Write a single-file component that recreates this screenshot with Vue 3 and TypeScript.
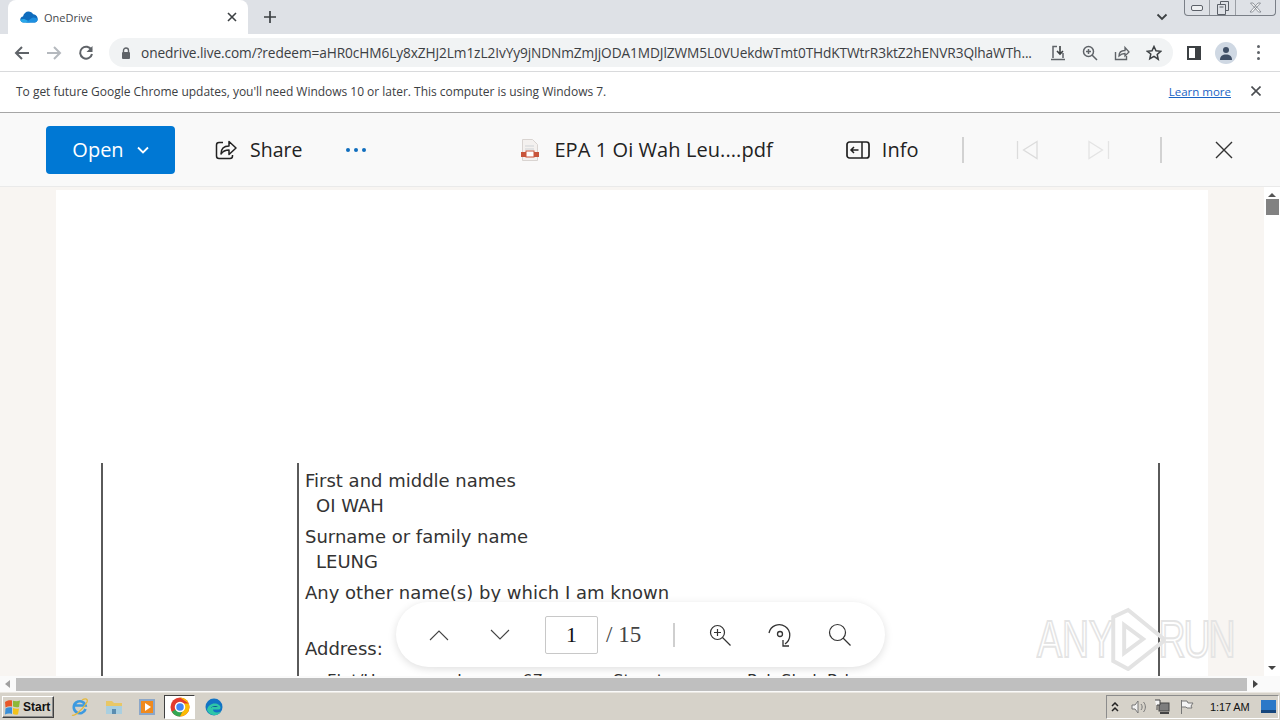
<script setup lang="ts">
const url = 'onedrive.live.com/?redeem=aHR0cHM6Ly8xZHJ2Lm1zL2IvYy9jNDNmZmJjODA1MDJlZWM5L0VUekdwTmt0THdKTWtrR3ktZ2hENVR3QlhaWTh...'
</script>

<template>
  <div class="screen">
    <div class="tabstrip">
      <div class="tab">
        <svg class="cloud" width="18" height="12" viewBox="0 0 18 12">
          <path d="M3.500 11.500C1.500 11.500.3 10 .3 8.500S1.400 5.700 3 5.500C3.500 2.500 6 .5 8.500.5c2 0 3.700 1 4.600 2.800C15.500 3.300 17.700 5.500 17.700 8c0 2-1.500 3.500-3.200 3.500z" fill="#0f6cbd"/>
          <path d="M3.500 11.500C1.500 11.500.3 10 .3 8.500c3-1 5-.5 7.200 1l2.500 2z" fill="#28a8ea"/>
          <path d="M6 11.500l5-4c2-1.500 4.500-1 6.700.5 0 2-1.500 3.500-3.200 3.500z" fill="#1d8fe0"/>
        </svg>
        <span class="tab-title">OneDrive</span>
        <svg class="tab-x" width="10" height="10" viewBox="0 0 10 10"><path d="M1 1l8 8M9 1l-8 8" stroke="#3c4043" stroke-width="1.600"/></svg>
      </div>
      <svg class="new-tab" width="12" height="12" viewBox="0 0 12 12"><path d="M6 0v12M0 6h12" stroke="#3c4043" stroke-width="1.700"/></svg>
      <div class="strip-fill"></div>
      <svg class="tab-search" width="12" height="8" viewBox="0 0 12 8"><path d="M1.500 1.500L6 6l4.500-4.500" fill="none" stroke="#3c4043" stroke-width="1.800"/></svg>
      <div class="winctl">
        <div class="wc wc-min"><span></span></div>
        <div class="wc wc-max">
          <svg width="12" height="14" viewBox="0 0 12 14"><path d="M3.500 3.500V.5h8v9h-3M.5 3.500h8v10h-8zM2.500 6h4" fill="none" stroke="#5b6068"/></svg>
        </div>
        <div class="wc wc-close">
          <svg width="13" height="11" viewBox="0 0 13 11"><path d="M1.500 1h2.500l8 9H9.500zM11.500 1H9l-8 9h2.500z" fill="#fff" stroke="#7a7f87" stroke-width=".8"/></svg>
        </div>
      </div>
    </div>

    <div class="toolbar">
      <svg class="nav first" width="16" height="16" viewBox="0 0 16 16"><path d="M15 8H2M8 2L2 8l6 6" fill="none" stroke="#5f6368" stroke-width="2"/></svg>
      <svg class="nav" width="16" height="16" viewBox="0 0 16 16"><path d="M1 8h13M8 2l6 6-6 6" fill="none" stroke="#b5b9be" stroke-width="2"/></svg>
      <svg class="nav" width="16" height="16" viewBox="0 0 16 16"><path d="M13.500 5A6 6 0 1 0 14 9" fill="none" stroke="#5f6368" stroke-width="2"/><path d="M14.500 1v6h-6z" fill="#5f6368"/></svg>
      <div class="omnibox">
        <svg class="lock" width="10" height="12" viewBox="0 0 10 12"><path d="M2.500 5V3.500a2.500 2.500 0 0 1 5 0V5" fill="none" stroke="#5f6368" stroke-width="1.400"/><rect x="1" y="5" width="8" height="7" rx="1" fill="#5f6368"/></svg>
        <span class="url">{{ url }}</span>
        <svg class="omni-i" width="16" height="16" viewBox="0 0 16 16"><path d="M3 13V1.500h4M13 8v5M1 14.500h14" fill="none" stroke="#5f6368" stroke-width="1.500"/><path d="M10 1v7M7 6l3 3 3-3" fill="none" stroke="#3c4043" stroke-width="1.600"/></svg>
        <svg class="omni-i" width="16" height="16" viewBox="0 0 16 16"><circle cx="6.500" cy="6.500" r="5" fill="none" stroke="#5f6368" stroke-width="1.500"/><path d="M10 10l5 5M4 6.500h5M6.500 4v5" stroke="#5f6368" stroke-width="1.500"/></svg>
        <svg class="omni-i" width="16" height="16" viewBox="0 0 16 16"><path d="M1.500 7v7.500h11V11" fill="none" stroke="#5f6368" stroke-width="1.400"/><path d="M5 11c0-4 3-5.500 6-5.500V2.500l4 4.500-4 4V8.500c-3 0-4.500 1-6 2.500z" fill="none" stroke="#5f6368" stroke-width="1.300"/></svg>
        <svg class="omni-i" width="16" height="16" viewBox="0 0 16 16"><path d="M8 1.500l2 4.300 4.700.5-3.500 3.200 1 4.700L8 11.300l-4.200 2.400 1-4.700L1.300 6.300 6 5.800z" fill="none" stroke="#3c4043" stroke-width="1.500"/></svg>
      </div>
      <svg class="side-i" width="14" height="14" viewBox="0 0 14 14"><rect x="1" y="1" width="12" height="12" fill="none" stroke="#3c4043" stroke-width="2"/><rect x="8" y="1" width="5" height="12" fill="#3c4043"/></svg>
      <div class="avatar">
        <svg width="14" height="14" viewBox="0 0 14 14"><circle cx="7" cy="4" r="3" fill="#3f4f66"/><path d="M1 14c0-4 2.500-5.500 6-5.500s6 1.500 6 5.500z" fill="#3f4f66"/></svg>
      </div>
      <div class="kebab"><i></i><i></i><i></i></div>
    </div>

    <div class="infobar">
      <span class="info-text">To get future Google Chrome updates, you'll need Windows 10 or later. This computer is using Windows 7.</span>
      <a class="learn">Learn more</a>
      <svg class="info-x" width="10" height="10" viewBox="0 0 10 10"><path d="M.5.500l9 9M9.500.500l-9 9" stroke="#4a4d51" stroke-width="1.600"/></svg>
    </div>

    <div class="viewerbar">
      <div class="open-btn">
        <span>Open</span>
        <svg width="12" height="8" viewBox="0 0 12 8"><path d="M1 1.500l5 5 5-5" fill="none" stroke="#fff" stroke-width="1.800"/></svg>
      </div>
      <div class="vb-item share">
        <svg width="22" height="22" viewBox="0 0 22 22"><path d="M8 3.500H4a2.500 2.500 0 0 0-2.500 2.500v11A2.500 2.500 0 0 0 4 19.500h11a2.500 2.500 0 0 0 2.500-2.500v-1" fill="none" stroke="#222" stroke-width="1.500"/><path d="M6 15c0-5 3-8 8-8V2.500L21 9l-7 6.500V11c-3 0-6 1-8 4z" fill="none" stroke="#222" stroke-width="1.500" stroke-linejoin="round"/></svg>
        <span>Share</span>
      </div>
      <div class="dots"><i></i><i></i><i></i></div>
      <div class="vb-file">
        <svg width="18" height="22" viewBox="0 0 18 22"><path d="M1.500.500h10l5 5v16h-15z" fill="#f4f1ef" stroke="#d9d4d1"/><path d="M4 7h9M4 10h9" stroke="#cfd3d6"/><rect x="0" y="13" width="18" height="5" fill="#c8543a"/><rect x="5" y="12" width="8" height="6" fill="#fff" stroke="#c8543a"/></svg>
        <span>EPA 1 Oi Wah Leu....pdf</span>
      </div>
      <div class="vb-item info">
        <svg width="24" height="20" viewBox="0 0 24 20"><rect x="1" y="2" width="22" height="16" rx="2.500" fill="none" stroke="#222" stroke-width="1.700"/><path d="M16 2v16M12.500 10H5M8 7l-3 3 3 3" fill="none" stroke="#222" stroke-width="1.500"/></svg>
        <span>Info</span>
      </div>
      <div class="vsep"></div>
      <svg class="pg first-pg" width="22" height="20" viewBox="0 0 22 20"><path d="M1.500 1v18M21 1.500L7.500 10 21 18.500z" fill="none" stroke="#dcdcdc" stroke-width="1.300"/></svg>
      <svg class="pg last-pg" width="22" height="20" viewBox="0 0 22 20"><path d="M20.500 1v18M1 1.500L14.500 10 1 18.500z" fill="none" stroke="#e4e4e4" stroke-width="1.300"/></svg>
      <div class="vsep sep2"></div>
      <svg class="close-x" width="18" height="18" viewBox="0 0 18 18"><path d="M1 1l16 16M17 1L1 17" stroke="#333" stroke-width="1.400"/></svg>
    </div>

    <div class="content">
      <div class="viewport">
        <div class="page">
          <div class="scan">
            <div class="scan-left"></div>
            <div class="scan-main">
              <div class="lab">First and middle names</div>
              <div class="val">OI WAH</div>
              <div class="lab">Surname or family name</div>
              <div class="val">LEUNG</div>
              <div class="lab">Any other name(s) by which I am known</div>
              <div class="val">&nbsp;</div>
              <div class="lab">Address:</div>
              <div class="addr"><span>Flat/House number</span><span>67</span><span>Street</span><span>Pak Shek Rd</span></div>
            </div>
          </div>
        </div>
        <div class="vscroll">
          <span class="up"></span>
          <span class="thumb"></span>
          <span class="down"></span>
        </div>
        <div class="pager">
          <svg class="chev" width="20" height="12" viewBox="0 0 20 12"><path d="M1 11l9-9 9 9" fill="none" stroke="#444" stroke-width="1.100"/></svg>
          <svg class="chev chev2" width="20" height="12" viewBox="0 0 20 12"><path d="M1 1l9 9 9-9" fill="none" stroke="#444" stroke-width="1.100"/></svg>
          <div class="pageno">1</div>
          <span class="pagecount">/ 15</span>
          <div class="psep"></div>
          <svg class="p-i zoom-in" width="24" height="24" viewBox="0 0 24 24"><circle cx="9.500" cy="9.500" r="7" fill="none" stroke="#333" stroke-width="1.200"/><path d="M14.500 14.500l8 8M9.500 6v7M6 9.500h7" stroke="#333" stroke-width="1.200"/></svg>
          <svg class="p-i rotate" width="26" height="26" viewBox="0 0 26 26"><path d="M2 11A10.500 10.500 0 1 1 18 22" fill="none" stroke="#333" stroke-width="1.300"/><circle cx="13" cy="12" r="2.500" fill="none" stroke="#333" stroke-width="1.300"/><path d="M16 18v6h6" fill="none" stroke="#333" stroke-width="1.300"/></svg>
          <svg class="p-i zoom" width="24" height="24" viewBox="0 0 24 24"><circle cx="9.500" cy="9.500" r="8" fill="none" stroke="#333" stroke-width="1.200"/><path d="M15 15l7.500 7.500" stroke="#333" stroke-width="1.200"/></svg>
        </div>
        <div class="watermark">
          <span>ANY</span>
          <svg class="wm-tri" width="80" height="64" viewBox="0 0 58 64" preserveAspectRatio="none"><path d="M5 10L5 54 20 62 57 33 20 3zM16 18v28l19-14z" fill="none" stroke="#e3e3e3" stroke-width="4"/></svg>
          <span class="wm-run">RUN</span>
        </div>
      </div>
      <div class="hscroll">
        <span class="left"></span>
        <span class="hthumb"></span>
        <span class="right"></span>
      </div>
    </div>

    <div class="taskbar">
      <div class="start">
        <svg width="17" height="16" viewBox="0 0 17 16"><path d="M1 3c2-1.500 4.500-2 7-1.500v6C5.500 7 3.500 7.500 1.500 8.500z" fill="#e8582a"/><path d="M9 1.700c2 .6 4.500.8 7-.2l-1 6.500c-2 .5-4 .3-6-.5z" fill="#8db83a"/><path d="M1.500 9.500c2-1 4-1.500 6.500-1V15c-2.500-.7-5-.5-7 .5z" fill="#3a8fd8"/><path d="M9 9c2 .8 4 1 6 .5l-1 6c-2 .4-3.500 0-5-.5z" fill="#f2c21b"/></svg>
        <span>Start</span>
      </div>
      <svg class="tb-i ie" width="20" height="20" viewBox="0 0 20 20"><path d="M15.500 12A6 6 0 1 1 15.500 8.500H5" fill="none" stroke="#3d9ae0" stroke-width="2.600"/><path d="M2 18c2 1.500 10-4 15-13 1-3-1-4-5-2" fill="none" stroke="#e6b93a" stroke-width="1.300"/></svg>
      <svg class="tb-i folder" width="18" height="18" viewBox="0 0 18 18"><path d="M1 3h6l2 2h8v11H1z" fill="#e8c766"/><path d="M1 8h16v8H1z" fill="#a9cfe0"/><rect x="7" y="11" width="4" height="5" fill="#5b8db0"/></svg>
      <div class="tb-i wmp"><span></span></div>
      <div class="tb-active">
        <svg width="20" height="20" viewBox="0 0 20 20"><circle cx="10" cy="10" r="9.500" fill="#e33b2e"/><path d="M10 10L1.800 14.800A9.500 9.500 0 0 0 10 19.500L14.500 10z" fill="#34a853"/><path d="M10 .5a9.500 9.500 0 0 1 8.800 6H10L14 12l-4 7.500A9.500 9.500 0 0 0 19.500 10c0-1.200-.2-2.400-.7-3.500z" fill="#fbbc05"/><circle cx="10" cy="10" r="4.500" fill="#4285f4" stroke="#fff" stroke-width="1.500"/></svg>
      </div>
      <svg class="tb-i edge" width="18" height="18" viewBox="0 0 18 18"><circle cx="9" cy="9" r="8.500" fill="#1273c4"/><path d="M2 12c1-6 8-8 12-5 2 1.500 2 4 0 4.500H8c0 3 4 4 8 2-2 3-5 4-8 3.500-3-.5-5-2.500-6-5z" fill="#2fc6a8"/><path d="M6 10c1-2 5-3 7-1H6z" fill="#0d4f9a"/></svg>
      <div class="task-fill"></div>
      <div class="tray">
        <svg width="8" height="10" viewBox="0 0 8 10"><path d="M1 4l3-3 3 3M1 9l3-3 3 3" fill="none" stroke="#222" stroke-width="1.500"/></svg>
        <svg class="t-sound" width="16" height="14" viewBox="0 0 16 14"><path d="M1 5h3l3-4v12l-3-4H1z" fill="#f2f2f2" stroke="#777"/><path d="M10 4c1.500 2 1.500 4 0 6M12.500 2c2.500 3 2.500 7 0 10" fill="none" stroke="#777"/></svg>
        <svg class="t-net" width="16" height="16" viewBox="0 0 16 16"><rect x="5" y="4" width="10" height="8" fill="#7d7d7d" stroke="#444"/><path d="M1 1h5v5H3v5" fill="#f5f5f5" stroke="#444"/><path d="M6 14h9" stroke="#444" stroke-width="2"/></svg>
        <svg class="t-flag" width="14" height="14" viewBox="0 0 14 14"><path d="M1.500 0v14M2 1h5l1 2h5l-2 3 1 2H7L6 7H2" fill="#f4f4f4" stroke="#777"/></svg>
        <span class="clock">1:17 AM</span>
        <svg class="t-desk" width="15" height="13" viewBox="0 0 15 13"><rect width="15" height="13" fill="#2a78c8"/><rect y="10" width="15" height="3" fill="#16467c"/></svg>
      </div>
    </div>
  </div>
</template>

<style scoped>
.screen {
  width: 1280px;
  height: 720px;
  display: flex;
  flex-direction: column;
  overflow: hidden;
  font-family: "Open Sans", "Liberation Sans", sans-serif;
  background: #fff;
  color: #222;
}
.tabstrip {
  height: 34px;
  flex: none;
  background: #dee1e6;
  display: flex;
  align-items: center;
  padding-left: 8px;
}
.tab {
  width: 240px;
  height: 34px;
  background: #fff;
  border-radius: 8px 8px 0 0;
  display: flex;
  align-items: center;
  padding: 0 11px 0 12px;
  box-sizing: border-box;
}
.cloud { flex: none; }
.tab-title {
  font-size: 11px;
  color: #45484c;
  margin-left: 6px;
  flex: 1;
}
.new-tab { margin-left: 16px; }
.strip-fill { flex: 1; }
.tab-search { margin-right: 16px; }
.winctl {
  align-self: flex-start;
  width: 92px;
  height: 16px;
  margin-right: 4px;
  border: 1px solid #7a7f87;
  border-top: none;
  border-radius: 0 0 4px 4px;
  box-sizing: border-box;
  display: flex;
}
.wc { display: flex; align-items: center; justify-content: center; height: 15px; overflow: hidden; }
.wc-min { width: 24px; border-right: 1px solid #9a9ea4; }
.wc-min span { width: 10px; height: 4px; border: 1px solid #5b6068; border-radius: 2px; background: #eef0f2; }
.wc-max { width: 25px; border-right: 1px solid #9a9ea4; }
.wc-close { flex: 1; }

.toolbar {
  height: 37px;
  flex: none;
  background: #fff;
  border-bottom: 1px solid #d9dadc;
  display: flex;
  align-items: center;
}
.nav { margin-left: 16px; flex: none; }
.nav.first { margin-left: 14px; }
.omnibox {
  width: 1064px;
  height: 29px;
  margin-left: 15px;
  border-radius: 15px;
  background: #f1f3f4;
  display: flex;
  align-items: center;
  padding: 0 11px 0 12px;
  box-sizing: border-box;
  flex: none;
}
.lock { flex: none; }
.url {
  flex: none;
  width: 894px;
  margin-left: 10px;
  margin-right: 15px;
  font-size: 13.700px;
  color: #3c4043;
  white-space: nowrap;
  overflow: hidden;
  letter-spacing: -0.100px;
}
.omni-i { flex: none; margin-right: 16px; }
.omni-i:last-child { margin-right: 0; }
.side-i { margin-left: 14px; flex: none; }
.avatar {
  width: 22px;
  height: 22px;
  margin-left: 14px;
  border-radius: 50%;
  background: #cfd8e3;
  display: flex;
  align-items: flex-end;
  justify-content: center;
  overflow: hidden;
  padding-bottom: 4px;
  box-sizing: border-box;
  flex: none;
}
.kebab { display: flex; flex-direction: column; gap: 3px; margin-left: 20px; }
.kebab i { width: 3px; height: 3px; border-radius: 50%; background: #5f6368; }

.infobar {
  height: 41px;
  flex: none;
  background: #fff;
  border-bottom: 1px solid #a6a6a6;
  display: flex;
  align-items: center;
  padding: 0 0 2px 16px;
  box-sizing: border-box;
  font-size: 12px;
  color: #3c4043;
}
.info-text { flex: 1; letter-spacing: -0.020px; }
.learn { color: #1a63c4; text-decoration: underline; font-size: 11.500px; margin-right: 20px; }
.info-x { margin-right: 19px; }

.viewerbar {
  height: 74px;
  flex: none;
  background: #f9f9f9;
  border-bottom: 1px solid #eaeaea;
  box-sizing: border-box;
  display: flex;
  align-items: center;
  padding-left: 46px;
  font-size: 20px;
  color: #222;
}
.open-btn {
  width: 129px;
  height: 48px;
  background: #0078d4;
  border-radius: 4px;
  color: #fff;
  display: flex;
  align-items: center;
  justify-content: center;
  gap: 13px;
  font-size: 20px;
  flex: none;
}
.vb-item { display: flex; align-items: center; flex: none; }
.share { margin-left: 40px; gap: 13px; }
.share span { font-size: 19.500px; }
.dots { display: flex; gap: 4px; margin-left: 44px; flex: none; }
.dots i { width: 4px; height: 4px; background: #106ebe; border-radius: 50%; }
.vb-file { display: flex; align-items: center; gap: 15px; margin-left: 155px; flex: none; }
.vb-file span { letter-spacing: 0.080px; }
.info { margin-left: 73px; gap: 12px; }
.vsep { width: 2px; height: 26px; background: #d2d2d2; margin-left: 44px; flex: none; }
.pg { flex: none; }
.first-pg { margin-left: 52px; }
.last-pg { margin-left: 50px; }
.sep2 { margin-left: 50px; }
.close-x { margin-left: 53px; flex: none; }

.content {
  flex: 1;
  display: flex;
  flex-direction: column;
  min-height: 0;
}
.viewport {
  height: 489px;
  flex: none;
  background: #f8f5f2;
  position: relative;
  display: flex;
  overflow: hidden;
  padding: 3px 0 0 56px;
  box-sizing: border-box;
}
.page {
  width: 1152px;
  background: #fff;
  padding: 273px 0 0 45px;
  box-sizing: border-box;
  flex: none;
  overflow: hidden;
}
.scan {
  display: flex;
  width: 1059px;
  height: 224px;
  border-left: 2px solid #5a5a5a;
  border-right: 2px solid #5a5a5a;
  box-sizing: border-box;
}
.scan-left { width: 196px; border-right: 2px solid #5a5a5a; flex: none; box-sizing: border-box; }
.scan-main {
  padding-left: 6px;
  font-family: "DejaVu Sans", sans-serif;
  font-size: 18px;
  color: #333;
  line-height: 25px;
}
.lab { white-space: nowrap; margin-top: 6px; }
.lab:first-child { margin-top: 5px; }
.val { padding-left: 11px; white-space: nowrap; }
.addr {
  display: grid;
  grid-template-columns: 195px 91px 134px auto;
  padding-left: 22px;
  margin-top: 10px;
  white-space: nowrap;
  font-size: 16.500px;
  line-height: 20px;
}
.vscroll {
  width: 16px;
  margin-left: 56px;
  margin-top: -3px;
  display: flex;
  flex-direction: column;
  align-items: center;
  flex: none;
  height: 489px;
  background: #fff;
}
.up {
  margin-top: 6px;
  width: 0; height: 0;
  border-left: 4px solid transparent;
  border-right: 4px solid transparent;
  border-bottom: 4px solid #555;
}
.thumb { width: 13px; height: 16px; background: #828282; margin-top: 2px; }
.down {
  margin-top: auto;
  margin-bottom: 6px;
  width: 0; height: 0;
  border-left: 4px solid transparent;
  border-right: 4px solid transparent;
  border-top: 4px solid #444;
}
.pager {
  position: absolute;
  left: 396px;
  top: 415px;
  width: 489px;
  height: 65px;
  border-radius: 33px;
  background: #fff;
  box-shadow: 0 2px 8px rgba(0,0,0,.13);
  display: flex;
  align-items: center;
  padding-left: 33px;
  box-sizing: border-box;
}
.chev { flex: none; }
.chev2 { margin-left: 41px; }
.pageno {
  width: 53px;
  height: 38px;
  margin-left: 35px;
  border: 1px solid #c8c8c8;
  border-radius: 2px;
  box-sizing: border-box;
  font-family: "Liberation Serif", serif;
  font-size: 22px;
  color: #111;
  display: flex;
  align-items: center;
  justify-content: center;
  flex: none;
}
.pagecount {
  font-family: "Liberation Serif", serif;
  font-size: 23px;
  color: #444;
  margin-left: 8px;
  flex: none;
}
.psep { width: 2px; height: 24px; background: #cfcfcf; margin-left: 32px; flex: none; }
.p-i { flex: none; }
.zoom-in { margin-left: 33px; }
.rotate { margin-left: 35px; }
.zoom { margin-left: 35px; }
.watermark {
  position: absolute;
  left: 1037px;
  top: 420px;
  display: flex;
  align-items: center;
  font-family: "Liberation Sans", sans-serif;
  font-size: 52px;
  color: transparent;
  -webkit-text-stroke: 2px #e4e4e4;
  transform: scaleX(.72);
  transform-origin: left center;
  width: 320px;
}
.wm-tri { flex: none; margin: 0 -10px 0 -8px; }
.wm-run { letter-spacing: -3px; }
.hscroll {
  height: 16px;
  flex: none;
  background: #fafafa;
  display: flex;
  align-items: center;
  padding-right: 16px;
}
.left {
  margin-left: 5px;
  width: 0; height: 0;
  border-top: 4px solid transparent;
  border-bottom: 4px solid transparent;
  border-right: 5px solid #a0a0a0;
}
.hthumb { width: 1231px; height: 13px; background: #bfbfbf; margin-left: 6px; }
.right {
  margin-left: 6px;
  width: 0; height: 0;
  border-top: 4px solid transparent;
  border-bottom: 4px solid transparent;
  border-left: 5px solid #444;
}

.taskbar {
  height: 28px;
  flex: none;
  background: #d6d2c9;
  border-top: 1px solid #eae7e1;
  box-sizing: border-box;
  display: flex;
  align-items: center;
  padding-left: 2px;
}
.start {
  width: 52px;
  height: 22px;
  box-sizing: border-box;
  border: 1px solid;
  border-color: #fff #404040 #404040 #fff;
  box-shadow: inset -1px -1px 0 #8c8c8c;
  background: #d6d2c9;
  display: flex;
  align-items: center;
  padding-left: 1px;
  gap: 2px;
  font-family: "Liberation Sans", sans-serif;
  font-size: 12px;
  font-weight: 700;
  color: #111;
}
.tb-i { flex: none; }
.ie { margin-left: 16px; }
.folder { margin-left: 15px; }
.wmp {
  margin-left: 16px;
  width: 16px;
  height: 16px;
  box-sizing: border-box;
  background: #8ba7c9;
  padding: 2px;
  display: flex;
}
.wmp span {
  flex: 1;
  background: #f08a1d;
  position: relative;
}
.wmp span::after {
  content: "";
  position: absolute;
  left: 4px;
  top: 2px;
  border-left: 6px solid #fff;
  border-top: 4px solid transparent;
  border-bottom: 4px solid transparent;
}
.tb-active {
  margin-left: 9px;
  width: 31px;
  height: 24px;
  box-sizing: border-box;
  background: #fff;
  border: 1px solid;
  border-color: #404040 #fff #fff #404040;
  display: flex;
  align-items: center;
  justify-content: center;
  flex: none;
}
.edge { margin-left: 10px; }
.task-fill { flex: 1; }
.tray {
  width: 173px;
  height: 24px;
  margin-right: 1px;
  box-sizing: border-box;
  border: 1px solid;
  border-color: #8c8c8c #fff #fff #8c8c8c;
  display: flex;
  align-items: center;
  padding-left: 4px;
  font-family: "Liberation Sans", sans-serif;
  font-size: 11px;
  color: #111;
}
.t-sound { margin-left: 12px; }
.t-net { margin-left: 7px; }
.t-flag { margin-left: 10px; }
.clock { margin-left: 16px; white-space: nowrap; letter-spacing: -.1px; }
.t-desk { margin-left: 11px; }
</style>
